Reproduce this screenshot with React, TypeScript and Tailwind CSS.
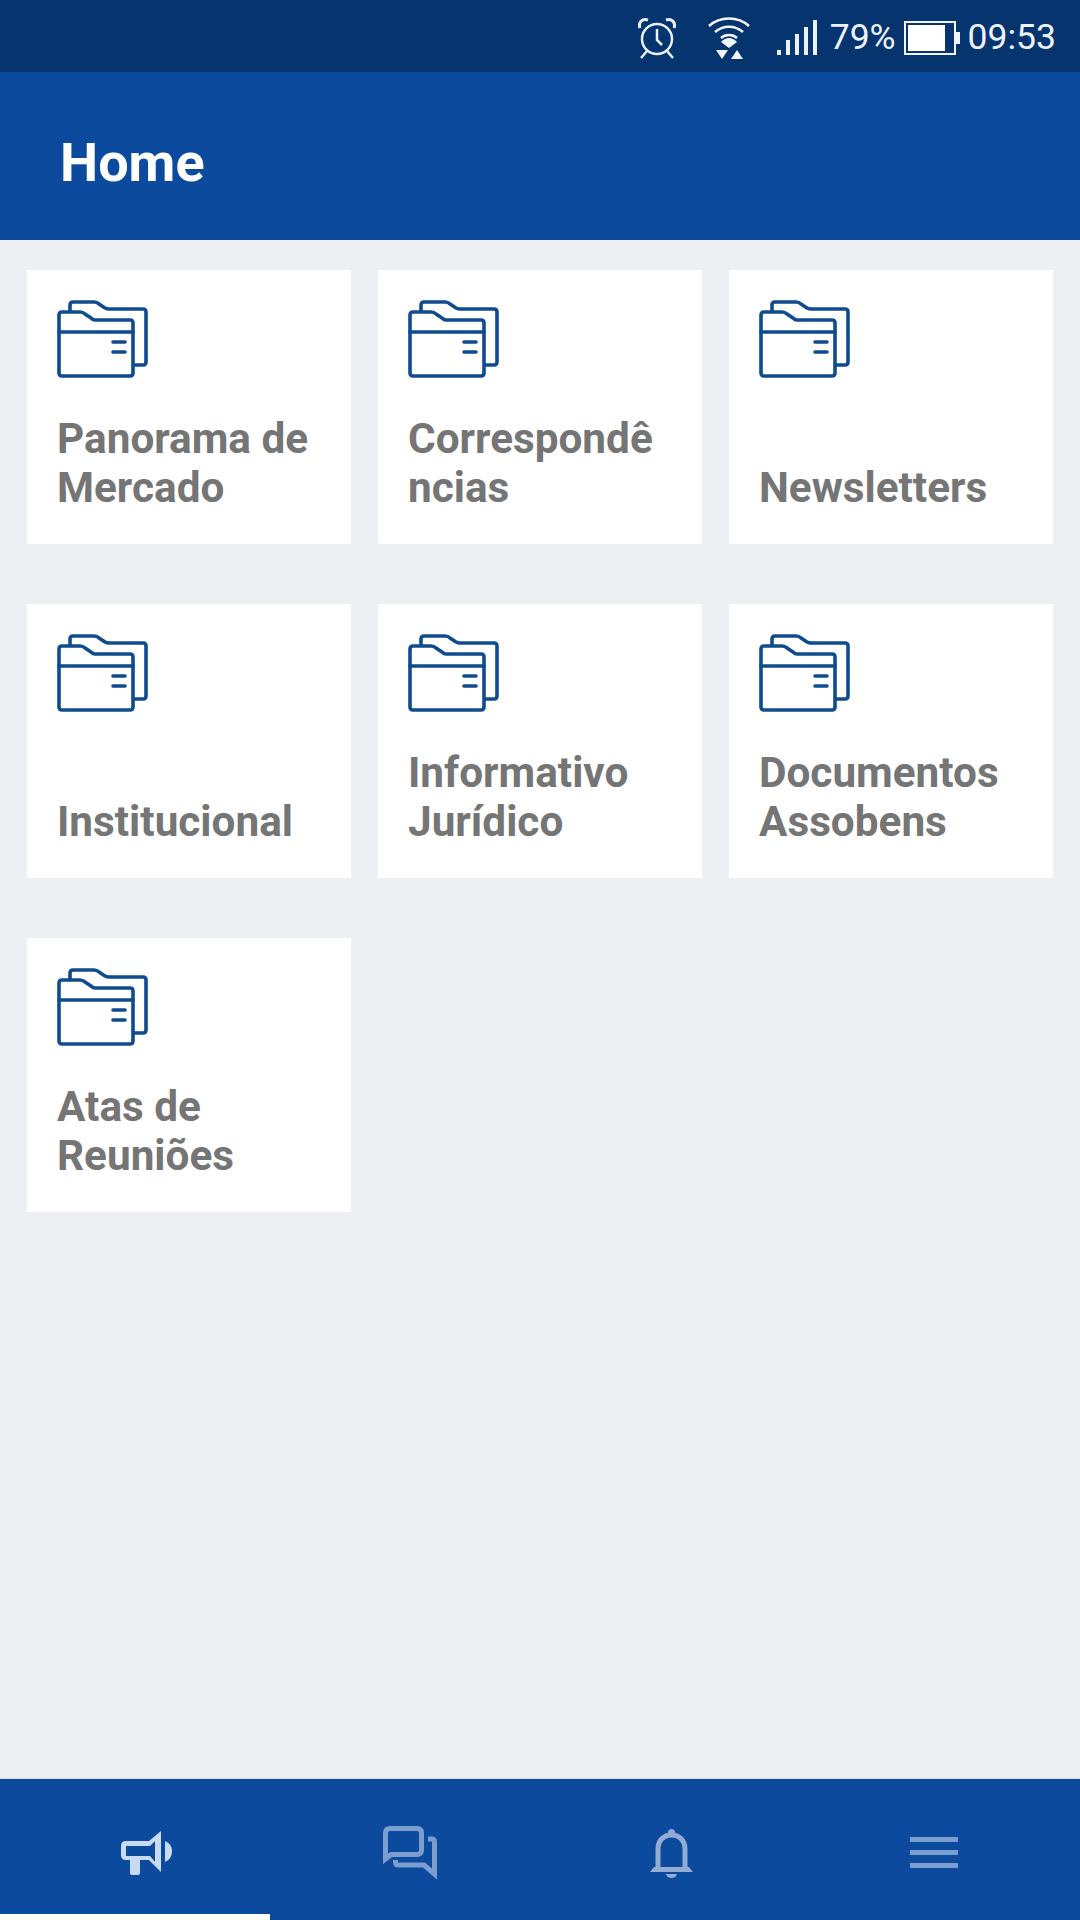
const FOLDERS = [
  'Panorama de Mercado',
  'Correspondências',
  'Newsletters',
  'Institucional',
  'Informativo Jurídico',
  'Documentos Assobens',
  'Atas de Reuniões',
];

function AlarmIcon() {
  return (
    <svg width="38" height="42" viewBox="0 0 38 42" fill="none" stroke="#e8f0fa" strokeWidth="2.5">
      <circle cx="19" cy="22" r="15" />
      <path d="M19 12V23L24 28" />
      <path d="M2 11C0 6 4 1 10 3" strokeWidth="3" />
      <path d="M36 11C38 6 34 1 28 3" strokeWidth="3" />
      <path d="M9 34L3 41M29 34L35 41" />
    </svg>
  );
}

function WifiIcon() {
  return (
    <svg width="42" height="42" viewBox="0 0 42 42" fill="none" stroke="#f2f6fb" strokeWidth="2.5">
      <path d="M1 9C12 -1 30 -1 41 9" />
      <path d="M7 15C15 8 27 8 35 15" />
      <path d="M13 21C17 17 25 17 29 21" />
      <path d="M13 25Q21 17 29 25L21 31Z" fill="#f2f6fb" stroke="none" />
      <path d="M8 33H20L14 42Z" fill="#f2f6fb" stroke="none" />
      <path d="M23 42H35L29 33Z" fill="#f2f6fb" stroke="none" />
    </svg>
  );
}

function SignalIcon() {
  return (
    <svg width="41" height="36" viewBox="0 0 41 36" fill="#eaf1fa">
      <rect x="0" y="30" width="4" height="5" />
      <rect x="9" y="20" width="4" height="15" />
      <rect x="18" y="14" width="4" height="21" />
      <rect x="27" y="7" width="4" height="28" />
      <rect x="36" y="0" width="4" height="35" />
    </svg>
  );
}

function BatteryIcon() {
  return (
    <svg width="56" height="34" viewBox="0 0 56 34">
      <rect x="1" y="1" width="50" height="32" fill="none" stroke="#f2f6fb" strokeWidth="2" />
      <rect x="4" y="4" width="37" height="26" fill="#ffffff" />
      <rect x="52" y="11" width="4" height="12" fill="#f2f6fb" />
    </svg>
  );
}

function FolderIcon() {
  return (
    <svg width="94" height="82" viewBox="0 0 94 82" fill="none" stroke="#0f4c8f" strokeWidth="3.6" strokeLinejoin="round" strokeLinecap="round">
      <path d="M14 13V7Q14 4 17 4H38Q41 4 43 6L49 10Q51 11 53 11H87Q90 11 90 14V64Q90 67 87 67H78" />
      <path d="M3 17Q3 14 6 14H24Q27 14 29 16L35 20Q37 22 39 22H74Q77 22 77 25V75Q77 78 74 78H6Q3 78 3 75Z" />
      <path d="M3 34H77" />
      <path d="M57 44H69M57 54H69" />
    </svg>
  );
}

function MegaphoneIcon() {
  return (
    <svg width="51" height="44" viewBox="0 0 51 44" fill="#c8dbf3">
      <path
        fillRule="evenodd"
        d="M5 10H28L40 0V41L28 29H19V42Q19 44 17 44H11Q9 44 9 42V29H5Q0 29 0 24V15Q0 10 5 10ZM5 15V25H29L34 31V10L29 15Z"
      />
      <path d="M44 10Q51 13 51 20Q51 28 44 31Z" />
    </svg>
  );
}

function ChatIcon() {
  return (
    <svg width="54" height="54" viewBox="0 0 54 54" fill="none" stroke="#7c9dd0" strokeWidth="5">
      <path d="M2.5 33V7Q2.5 2.5 7 2.5H34Q38.5 2.5 38.5 7V24Q38.5 28.5 34 28.5H8Z" />
      <path d="M45 13H49Q51.5 13 51.5 16V48L41 39H15Q12.5 39 12.5 36V34" />
    </svg>
  );
}

function BellIcon() {
  return (
    <svg width="43" height="50" viewBox="0 0 43 50" fill="none" stroke="#93acd4" strokeWidth="5">
      <path d="M8 41V21C8 12 14 7 21.5 7S35 12 35 21V41" />
      <circle cx="21.5" cy="4.5" r="3.5" fill="#93acd4" stroke="none" />
      <path d="M0 44L4 39H39L43 44Z" fill="#93acd4" stroke="none" />
      <path d="M16 46H27Q26 50 21.5 50T16 46Z" fill="#93acd4" stroke="none" />
    </svg>
  );
}

function MenuIcon() {
  return (
    <div className="flex flex-col gap-[8px] ml-[-22px]">
      <div className="w-[48px] h-[5px] bg-[#7c9dd0]" />
      <div className="w-[48px] h-[5px] bg-[#7c9dd0]" />
      <div className="w-[48px] h-[5px] bg-[#7c9dd0]" />
    </div>
  );
}

export default function App() {
  return (
    <div className="flex flex-col h-[1920px] w-[1080px] bg-[#eeeff3] font-['Roboto',sans-serif]">
      {/* Status bar */}
      <div className="h-[72px] bg-[#05346f] flex items-center justify-end pr-[24px] pt-[3px] text-[35.5px] text-[#eef3fa]">
        <div className="mr-[32px]"><AlarmIcon /></div>
        <div className="mr-[27px]"><WifiIcon /></div>
        <div className="mr-[12px]"><SignalIcon /></div>
        <span className="mr-[8px]">79%</span>
        <div className="mr-[8px]"><BatteryIcon /></div>
        <span>09:53</span>
      </div>

      <header className="h-[168px] bg-[#0c4a9e] flex items-center pl-[60px] pt-[12px]">
        <h1 className="text-[54px] font-bold text-white">Home</h1>
      </header>

      <main className="flex-1 px-[27px] pt-[30px]">
        <div className="grid grid-cols-3 gap-x-[27px] gap-y-[60px]">
          {FOLDERS.map(name => (
            <div key={name} className="h-[274px] bg-white pl-[29px] pr-[29px] pt-[28px] pb-[32px] flex flex-col justify-between">
              <FolderIcon />
              <p className="text-[42.3px] leading-[49px] font-bold text-[#757575] pl-[1px] [overflow-wrap:anywhere]">{name}</p>
            </div>
          ))}
        </div>
      </main>

      {/* Bottom tabs */}
      <nav className="h-[143px] flex flex-col">
        <div className="h-[2px] bg-[#e2e8ef]" />
        <div className="flex-1 bg-[#0c4a9e] flex flex-col">
          <div className="flex-1 grid grid-cols-4 pt-[12px]">
            <div className="flex items-center justify-center ml-[22px]"><MegaphoneIcon /></div>
            <div className="flex items-center justify-center ml-[10px]"><ChatIcon /></div>
            <div className="flex items-center justify-center mr-[8px]"><BellIcon /></div>
            <div className="flex items-center justify-center"><MenuIcon /></div>
          </div>
          <div className="h-[6px] w-[270px] bg-white" />
        </div>
      </nav>
    </div>
  );
}
